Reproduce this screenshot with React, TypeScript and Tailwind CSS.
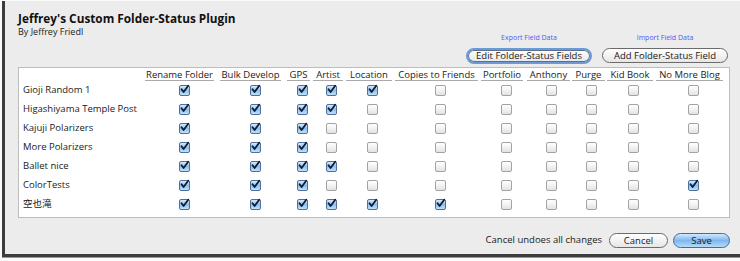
import React from "react";

type Col = { name: string; hw: string };

const cols: Col[] = [
  { name: "Rename Folder", hw: "w-[69px]" },
  { name: "Bulk Develop", hw: "w-[61px]" },
  { name: "GPS", hw: "w-[23px]" },
  { name: "Artist", hw: "w-[30px]" },
  { name: "Location", hw: "w-[46px]" },
  { name: "Copies to Friends", hw: "w-[83px]" },
  { name: "Portfolio", hw: "w-[42px]" },
  { name: "Anthony", hw: "w-[43px]" },
  { name: "Purge", hw: "w-[33px]" },
  { name: "Kid Book", hw: "w-[46px]" },
  { name: "No More Blog", hw: "w-[67px]" },
];

const rows: { label: string; checks: number[] }[] = [
  { label: "Gioji Random 1", checks: [1, 1, 1, 1, 1, 0, 0, 0, 0, 0, 0] },
  { label: "Higashiyama Temple Post", checks: [1, 1, 1, 1, 0, 0, 0, 0, 0, 0, 0] },
  { label: "Kajuji Polarizers", checks: [1, 1, 1, 0, 0, 0, 0, 0, 0, 0, 0] },
  { label: "More Polarizers", checks: [1, 1, 1, 0, 0, 0, 0, 0, 0, 0, 0] },
  { label: "Ballet nice", checks: [1, 1, 1, 1, 0, 0, 0, 0, 0, 0, 0] },
  { label: "ColorTests", checks: [1, 1, 1, 0, 0, 0, 0, 0, 0, 0, 1] },
  { label: "空也滝", checks: [1, 1, 1, 1, 1, 1, 0, 0, 0, 0, 0] },
];

function Check({ on }: { on: boolean }) {
  if (on) {
    return (
      <div className="relative h-[11px] w-[11px] rounded-[2px] border border-[#4f6f9c] bg-gradient-to-b from-[#d6e9fb] via-[#8ec0ef] to-[#bfe0fb]">
        <svg viewBox="0 0 11 11" className="absolute left-[-1px] top-[-2px] h-[11px] w-[11px]">
          <path d="M2.5 5.2 L4.6 8 L9.2 1.8" fill="none" stroke="#0e1c33" strokeWidth="1.8" strokeLinecap="round" strokeLinejoin="round" />
        </svg>
      </div>
    );
  }
  return (
    <div className="h-[11px] w-[11px] rounded-[2px] border border-[#a3a3a3] bg-gradient-to-b from-[#ffffff] via-[#f2f2f2] to-[#e2e2e2]" />
  );
}

export default function App() {
  return (
    <div className="h-[261px] w-[740px] overflow-hidden bg-[#fafafa] pl-[2px] pt-[1px] font-['Open_Sans',sans-serif] text-[#1a1a1a]">
      <div className="flex h-[256px] flex-col border-b-[3px] border-l-[3px] border-[#3c3c3c] bg-[#ececec] pl-[13px] pr-[10px] shadow-[0_1px_0_#9a9a9a]">
        {/* header */}
        <div className="flex h-[62px] justify-between">
          <div className="pt-[9px]">
            <div className="text-[11.8px] font-bold leading-[16px] text-[#111]">Jeffrey's Custom Folder-Status Plugin</div>
            <div className="text-[9px] leading-[11px] text-[#222]">By Jeffrey Friedl</div>
          </div>
          <div className="mr-[2px] flex gap-[10px] pt-[32px]">
            <div className="flex flex-col items-center">
              <div className="h-[10px] text-[7px] leading-[10px] text-[#4a5cf4]">Export Field Data</div>
              <div className="mt-[5px] flex h-[16px] w-[126px] items-center justify-center rounded-full border-2 border-[#6d9ad6] bg-gradient-to-b from-[#ffffff] to-[#e6e6e6] text-[9.5px] leading-[12px] shadow-[inset_0_0_0_1px_#5a6f8a]">
                Edit Folder-Status Fields
              </div>
            </div>
            <div className="flex flex-col items-center">
              <div className="h-[10px] text-[7px] leading-[10px] text-[#4a5cf4]">Import Field Data</div>
              <div className="mt-[5px] flex h-[15px] w-[126px] items-center justify-center rounded-full border border-[#6b6b6b] bg-gradient-to-b from-[#ffffff] to-[#e6e6e6] text-[9.5px] leading-[12px]">
                Add Folder-Status Field
              </div>
            </div>
          </div>
        </div>

        {/* table box */}
        <div className="mt-[4px] h-[151px] border border-[#bdbdbd] bg-white">
          <div className="grid grid-cols-[126px_75px_67px_26px_33px_49px_86px_46px_45px_35px_49px_70px] text-[9.5px]">
            <div className="h-[13px]" />
            {cols.map((c) => (
              <div key={c.name} className="h-[13px]">
                <div className={`${c.hw} h-[13px] whitespace-nowrap border-b border-[#a9a9a9] pt-[1px] text-center leading-[11px]`}>
                  {c.name}
                </div>
              </div>
            ))}
            {rows.map((r) => (
              <React.Fragment key={r.label}>
                <div className="flex h-[19px] items-center whitespace-nowrap pl-[4px] font-['Open_Sans','Noto_Sans_CJK_JP',sans-serif]">
                  {r.label}
                </div>
                {r.checks.map((v, i) => (
                  <div key={i} className="flex h-[19px] items-center justify-center pl-[4px]">
                    <Check on={v === 1} />
                  </div>
                ))}
              </React.Fragment>
            ))}
          </div>
        </div>

        {/* footer */}
        <div className="mt-[15px] flex h-[15px] items-center justify-end">
          <span className="mr-[7px] text-[9.5px]">Cancel undoes all changes</span>
          <div className="mr-[5px] flex h-[15px] w-[59px] items-center justify-center rounded-full border border-[#6b6b6b] bg-gradient-to-b from-[#ffffff] to-[#e6e6e6] text-[9.5px] leading-[12px]">
            Cancel
          </div>
          <div className="flex h-[15px] w-[57px] items-center justify-center rounded-full border border-[#4b6a98] bg-gradient-to-b from-[#d3e8fc] via-[#7fb6ee] to-[#b5dcfb] text-[9.5px] leading-[12px]">
            Save
          </div>
        </div>
      </div>
    </div>
  );
}
